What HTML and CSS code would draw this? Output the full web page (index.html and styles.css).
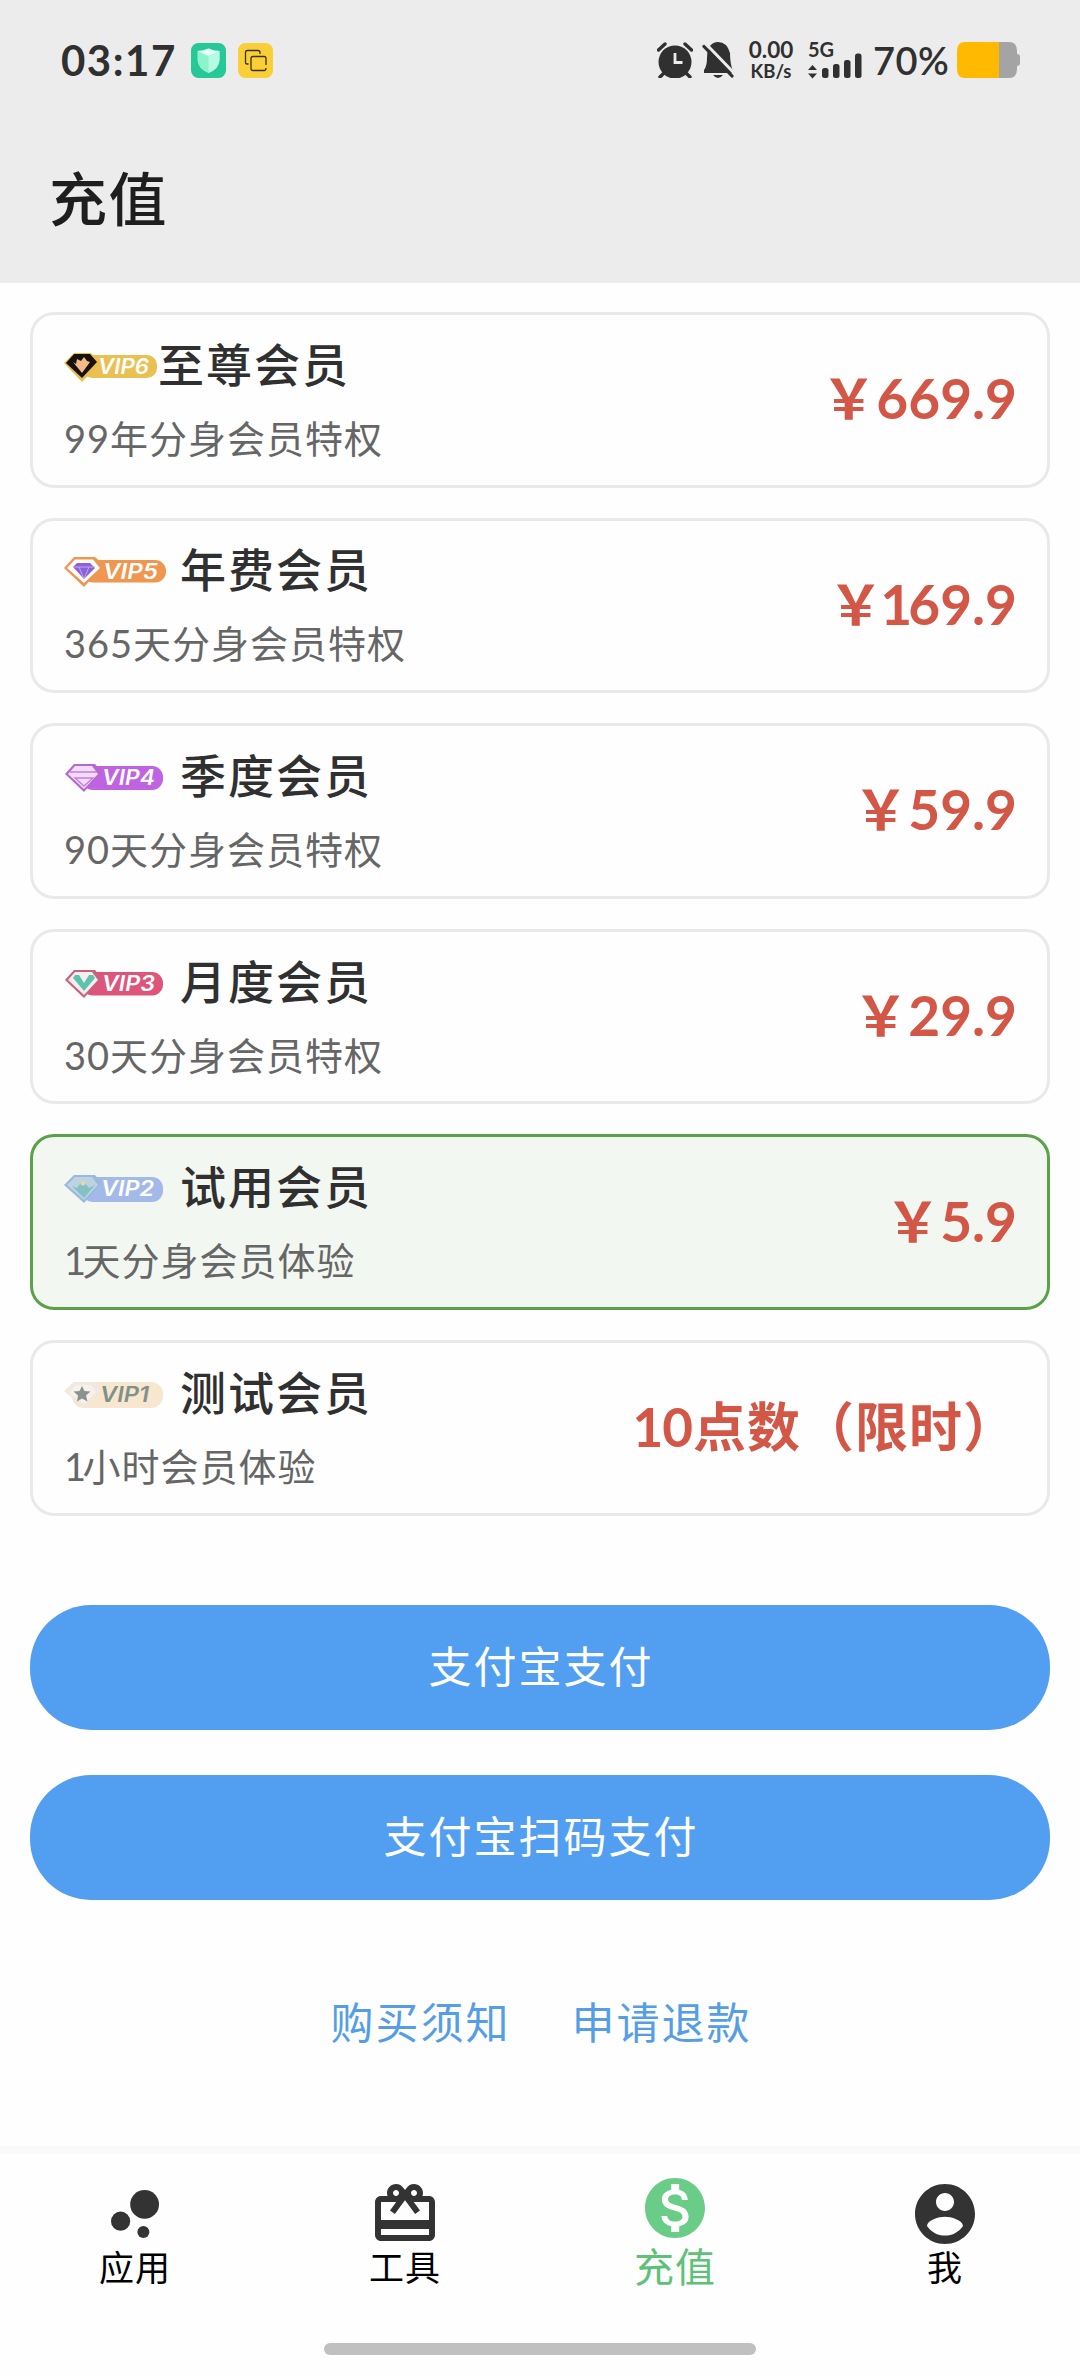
FILE: index.html
```html
<!DOCTYPE html>
<html lang="zh-CN">
<head>
<meta charset="utf-8">
<title>充值</title>
<link rel="stylesheet" href="styles.css">
</head>
<body>
<div class="screen">
  <header class="top">
    <div class="status">
      <span class="clock">03:17</span>
      <svg class="app-icon shield" viewBox="0 0 35 35"><rect width="35" height="35" rx="7.500" fill="#27c898"/><path d="M6.500 8Q12 8 17.500 5.500 23 8 28.500 8V17Q28 26 17.500 30 7 26 6.500 17Z" fill="#8df3cd"/><path d="M6.500 8Q12 8 17.500 5.500 23 8 28.500 8L17.500 13Z" fill="#e4fff5"/><path d="M17.500 13 28.500 8V17Q28 26 17.500 30Z" fill="#b5fae2"/></svg>
      <svg class="app-icon" viewBox="0 0 35 35"><rect width="35" height="35" rx="7.500" fill="#f8cf36"/><g fill="none" stroke="#3c300c" stroke-width="1.300"><path d="M10.500 21H9Q7.500 21 7.500 19.500V9.500Q7.500 7.500 9.500 7.500H20Q22 7.500 22 9.500V11"/><path d="M28 22V15.500Q28 13.500 26 13.500H15Q13 13.500 13 15.500V25.500Q13 27.500 15 27.500H26Q28 27.500 28 25"/></g></svg>
      <div class="status-right">
        <svg class="alarm" viewBox="0 0 36 36"><circle cx="18" cy="20" r="16.500" fill="#303030"/><path d="M1.500 8 8 2M28 2l6.500 6M3 35l5-5M33 35l-5-5" stroke="#303030" stroke-width="3.400" stroke-linecap="round"/><path d="M18 11v9.500h7.500" fill="none" stroke="#ececec" stroke-width="2.800"/></svg>
        <svg class="bell" viewBox="0 0 32 36"><path d="M8 4Q11 0 16 0 25 0 28 11 28 22 31 29V31H2V28Q5 24 5 16 5 8 8 4Z" fill="#303030"/><path d="M11 33H21Q16 39 11 33Z" fill="#303030"/><path d="M3 1 32 31" stroke="#ececec" stroke-width="3"/><path d="M2 4.500 30 34" stroke="#303030" stroke-width="3.200" stroke-linecap="round"/></svg>
        <div class="speed"><span>0.00</span><span class="unit">KB/s</span></div>
        <div class="network"><span class="gen">5G</span>
          <svg class="signal" viewBox="0 0 54 26"><g fill="#303030"><path d="M0 17 4.500 12 9 17ZM0 20.500H9L4.500 25.500Z"/><rect x="14" y="15" width="6.500" height="10" rx="2.500"/><rect x="25" y="11" width="6.500" height="14" rx="2.500"/><rect x="36" y="7" width="6.500" height="18" rx="2.500"/><rect x="47" y="0.500" width="6.500" height="24.500" rx="2.500"/></g></svg>
        </div>
        <span class="percent">70%</span>
        <svg class="battery" viewBox="0 0 63 36"><path d="M42 0H52Q60 0 60 9V27Q60 36 52 36H42ZM60 12Q63 12 63 15V21Q63 24 60 24Z" fill="#a4a4a4"/><path d="M42 0H8Q0 0 0 9V27Q0 36 8 36H42Z" fill="#ffb900"/></svg>
      </div>
    </div>
    <h1 class="title">充值</h1>
  </header>

  <main class="content">
    <section class="plans">
      <article class="plan">
        <div class="info">
          <div class="name tight"><svg class="badge first" viewBox="0 0 94 30"><rect x="18" y="3" width="75" height="23" rx="10" fill="#e9c052"/><path d="M0 11 10 1H27L36 11 18 30Z" fill="#e9bd48"/><path d="M2 11 10 2H26L33 10 18 26Z" fill="#17110d"/><path d="M9 10 12 12 13 7 17 9 20 5 23 9 26 10 18 21Z" fill="#f4b988"/><text class="vip" x="34" y="21.500" textLength="51" lengthAdjust="spacingAndGlyphs">VIP6</text></svg>至尊会员</div>
          <p class="desc">99年分身会员特权</p>
        </div>
        <div class="price">￥669.9</div>
      </article>
      <article class="plan">
        <div class="info">
          <div class="name"><svg class="badge" viewBox="0 0 102 30"><rect x="18" y="3" width="84" height="22.500" rx="11" fill="#ef9650"/><path d="M0 11 10 0H31L40 8 20 30Z" fill="#ef9650"/><path d="M3 11 11 2.500H29L36 11 20 26Z" fill="#fff"/><path d="M9 10 13 6H26L31 11 20 22Z" fill="#8c62d8"/><path d="M9 10H31M15 10l5 12 5-12" stroke="#c5a4f2" fill="none"/><text class="vip" x="39" y="21.500" textLength="55" lengthAdjust="spacingAndGlyphs">VIP5</text></svg>年费会员</div>
          <p class="desc">365天分身会员特权</p>
        </div>
        <div class="price">￥<span class="one">1</span>69.9</div>
      </article>
      <article class="plan">
        <div class="info">
          <div class="name"><svg class="badge" viewBox="0 0 102 30"><rect x="18" y="3" width="81" height="24" rx="11" fill="#c063e2"/><path d="M1 11 10 1H31L38 9 20 29Z" fill="#b568cf"/><path d="M4 11 11 3H28L34 11 20 26Z" fill="#f3dcfb"/><path d="M6 9H33M11 15H29L20 23Z" fill="none" stroke="#c27fdc" stroke-width="1.400"/><text class="vip" x="38" y="21.500" textLength="53" lengthAdjust="spacingAndGlyphs">VIP4</text></svg>季度会员</div>
          <p class="desc">90天分身会员特权</p>
        </div>
        <div class="price">￥59.9</div>
      </article>
      <article class="plan">
        <div class="info">
          <div class="name"><svg class="badge" viewBox="0 0 102 30"><rect x="18" y="3" width="81" height="23.500" rx="11" fill="#de557c"/><path d="M1 11 10 1H31L38 9 20 29Z" fill="#c9607c"/><path d="M4 11 11 3H28L34 11 20 26Z" fill="#f5eeee"/><path d="M11 6H15L20 14 25 6H29L31 9 20 22 9 9Z" fill="#5cc4aa"/><text class="vip" x="38" y="21.500" textLength="53" lengthAdjust="spacingAndGlyphs">VIP3</text></svg>月度会员</div>
          <p class="desc">30天分身会员特权</p>
        </div>
        <div class="price">￥29.9</div>
      </article>
      <article class="plan selected">
        <div class="info">
          <div class="name"><svg class="badge" viewBox="0 0 102 30"><rect x="18" y="3" width="81" height="25" rx="11" fill="#a3bae9"/><path d="M0 11 10 1H31L38 9 20 29Z" fill="#9bb8e0"/><path d="M3 11 11 3H28L34 11 20 26Z" fill="#bdd3df"/><path d="M8 12 13 14 19 6 25 14 31 11 20 24Z" fill="#85c1c4"/><circle cx="19" cy="9" r="2.500" fill="#dfd8b5"/><text class="vip" x="37" y="21.500" textLength="53" lengthAdjust="spacingAndGlyphs">VIP2</text></svg>试用会员</div>
          <p class="desc"><span class="one">1</span>天分身会员体验</p>
        </div>
        <div class="price">￥5.9</div>
      </article>
      <article class="plan">
        <div class="info">
          <div class="name"><svg class="badge" viewBox="0 0 102 30"><rect x="8" y="2" width="91" height="26" rx="12" fill="#f8e7cf"/><path d="M0 11 10 2H31L38 11 20 28Z" fill="#f2e8dd"/><path d="M5 13 12 5H27L32 12 20 24Z" fill="#f5f2ed"/><path d="M18 6l2.500 5 6 .5-4.500 4 1.500 6-5.500-3-5 3 1-6-4.500-4 6-.5Z" fill="#8c938e"/><text class="vip dark" x="36" y="21.500" textLength="49" lengthAdjust="spacingAndGlyphs">VIP1</text></svg>测试会员</div>
          <p class="desc"><span class="one">1</span>小时会员体验</p>
        </div>
        <div class="price points"><span class="one">1</span>0<span class="cjk">点数（限时）</span></div>
      </article>
    </section>

    <div class="actions">
      <button class="pay">支付宝支付</button>
      <button class="pay">支付宝扫码支付</button>
    </div>
    <div class="links"><a>购买须知</a><a>申请退款</a></div>
  </main>

  <nav class="tabs">
    <a class="tab"><svg viewBox="0 0 24 24"><circle cx="7.200" cy="14.400" r="3.200"/><circle cx="14.800" cy="18" r="2"/><circle cx="15.200" cy="8.800" r="4.800"/></svg><span>应用</span></a>
    <a class="tab"><svg viewBox="0 0 24 24"><path d="M20 6h-2.180c.11-.31.18-.65.18-1 0-1.660-1.340-3-3-3-1.050 0-1.960.54-2.500 1.350l-.5.67-.5-.68C10.960 2.540 10.050 2 9 2 7.340 2 6 3.340 6 5c0 .35.07.69.18 1H4c-1.110 0-1.990.89-1.990 2L2 19c0 1.110.89 2 2 2h16c1.110 0 2-.89 2-2V8c0-1.110-.89-2-2-2zm-5-2c.55 0 1 .45 1 1s-.45 1-1 1-1-.45-1-1 .45-1 1-1zM9 4c.55 0 1 .45 1 1s-.45 1-1 1-1-.45-1-1 .45-1 1-1zm11 15H4v-2h16v2zm0-5H4V8h5.080L7 10.830 8.620 12 11 8.760l1-1.360 1 1.360L15.380 12 17 10.830 14.920 8H20v6z"/></svg><span>工具</span></a>
    <a class="tab active"><svg viewBox="0 0 24 24"><path d="M12 2C6.480 2 2 6.480 2 12s4.480 10 10 10 10-4.480 10-10S17.520 2 12 2zm1.410 16.090V20h-2.670v-1.930c-1.710-.36-3.160-1.460-3.270-3.400h1.960c.1 1.050.82 1.870 2.650 1.870 1.960 0 2.400-.98 2.400-1.590 0-.83-.44-1.610-2.670-2.140-2.480-.6-4.180-1.620-4.180-3.670 0-1.720 1.390-2.840 3.110-3.210V4h2.670v1.950c1.860.45 2.790 1.860 2.850 3.390H14.300c-.05-1.110-.64-1.870-2.220-1.870-1.500 0-2.400.68-2.400 1.640 0 .84.65 1.390 2.670 1.910s4.180 1.390 4.180 3.910c-.01 1.830-1.380 2.830-3.120 3.160z"/></svg><span>充值</span></a>
    <a class="tab"><svg viewBox="0 0 24 24"><path d="M12 2C6.480 2 2 6.480 2 12s4.480 10 10 10 10-4.480 10-10S17.520 2 12 2zm0 3c1.660 0 3 1.340 3 3s-1.340 3-3 3-3-1.340-3-3 1.340-3 3-3zm0 14.200c-2.500 0-4.710-1.280-6-3.220.03-1.990 4-3.080 6-3.080 1.990 0 5.970 1.090 6 3.080-1.290 1.940-3.500 3.220-6 3.220z"/></svg><span>我</span></a>
  </nav>
  <div class="gesture"><i></i></div>
</div>
</body>
</html>
```
FILE: styles.css
```css
* { box-sizing: border-box; }
body {
  margin: 0;
  background: #fefefe;
  font-family: Lato, "Noto Sans CJK SC", sans-serif;
  color: #303030;
}
svg { display: block; flex: none; }
.screen { width: 1080px; height: 2376px; display: flex; flex-direction: column; overflow: hidden; }

.top { height: 283px; background: #ececec; }
.status { height: 120px; padding: 0 60px 0 61px; display: flex; align-items: center; }
.clock { width: 130px; font-size: 42px; font-weight: 700; line-height: 60px; letter-spacing: 1.500px; }
.app-icon { width: 35px; height: 35px; }
.shield { margin-right: 12px; }
.status-right { margin-left: auto; display: flex; align-items: center; line-height: 1; font-weight: 700; }
.alarm { width: 36px; height: 36px; margin-right: 9px; }
.bell { width: 32px; height: 36px; margin-right: 13px; }
.speed { width: 48px; height: 40px; display: flex; flex-direction: column; justify-content: space-between; align-items: center; font-size: 22.500px; line-height: 19px; margin-right: 13px; white-space: nowrap; }
.unit { font-size: 18.500px; line-height: 18px; }
.network { width: 54px; height: 36px; display: flex; flex-direction: column; margin-right: 11px; }
.gen { font-size: 20px; line-height: 14px; height: 11px; }
.signal { width: 54px; height: 26px; }
.percent { width: 84px; font-size: 38px; line-height: 60px; font-weight: 600; letter-spacing: .5px; }
.battery { width: 63px; height: 36px; }
.title { margin: 0; padding: 34px 0 0 49px; font-size: 58px; line-height: 90px; font-weight: 500; letter-spacing: 1.500px; color: #1e1e1e; }

.content { padding: 29px 30px 0; height: 1863px; }
.plans { display: flex; flex-direction: column; gap: 30px; }
.plan {
  height: 175.600px;
  border: 3px solid #e9e9e9;
  border-radius: 24px;
  padding: 0 30px 0 31px;
  display: flex;
  justify-content: space-between;
  align-items: center;
}
.plan.selected { border-color: #5ba149; background: #f2f7f2; }
.info { display: flex; flex-direction: column; gap: 13px; padding-top: 3px; }
.name { display: flex; align-items: center; gap: 14px; font-size: 46px; line-height: 60px; font-weight: 500; letter-spacing: 2px; }
.name.tight { gap: 0; }
.badge { width: 102px; height: 30px; margin-top: 4px; overflow: visible; }
.badge.first { width: 94px; }
.vip { font: italic 600 21px Inter, sans-serif; letter-spacing: 0; fill: #fff; }
.vip.dark { fill: #7f918a; }
.desc { margin: 0; font-size: 38px; line-height: 60px; color: #666; letter-spacing: 1px; }
.desc .one { letter-spacing: -3.500px; }
.price { font-size: 55px; line-height: 80px; padding-bottom: 3px; font-weight: 700; color: #d35747; white-space: nowrap; }
.price .one { margin-left: -3px; letter-spacing: -4px; }
.points { font-size: 53px; padding-bottom: 1px; }
.points .one { letter-spacing: -1px; }
.points .cjk { letter-spacing: 1px; }

.actions { margin-top: 89px; display: flex; flex-direction: column; gap: 45px; }
.pay {
  height: 125px;
  border: 0;
  border-radius: 61px;
  padding: 0 0 6px 2px;
  background: #529ff1;
  color: #fff;
  font: 400 43px/60px "Noto Sans CJK SC", sans-serif;
  letter-spacing: 2px;
}
.links { margin-top: 88px; padding-left: 2px; display: flex; justify-content: center; gap: 61px; font-size: 43px; line-height: 70px; letter-spacing: 2px; color: #559ee6; }

.tabs { height: 176px; border-top: 8px solid #f9f9f9; display: grid; grid-template-columns: repeat(4, 1fr); }
.tab { display: flex; flex-direction: column; align-items: center; padding-top: 24px; font-size: 35px; line-height: 34px; color: #000; letter-spacing: 1px; }
.tab svg { width: 72px; height: 72px; fill: #333; }
.tab.active { padding-top: 18px; color: #5dc177; font-size: 40px; }
.tab.active svg { fill: #69cc87; }
.tab.active span { margin-top: 6px; }
.gesture { flex: 1; display: flex; justify-content: center; padding-top: 21px; }
.gesture i { width: 432px; height: 12px; border-radius: 6px; background: #c0c0c0; }
```
